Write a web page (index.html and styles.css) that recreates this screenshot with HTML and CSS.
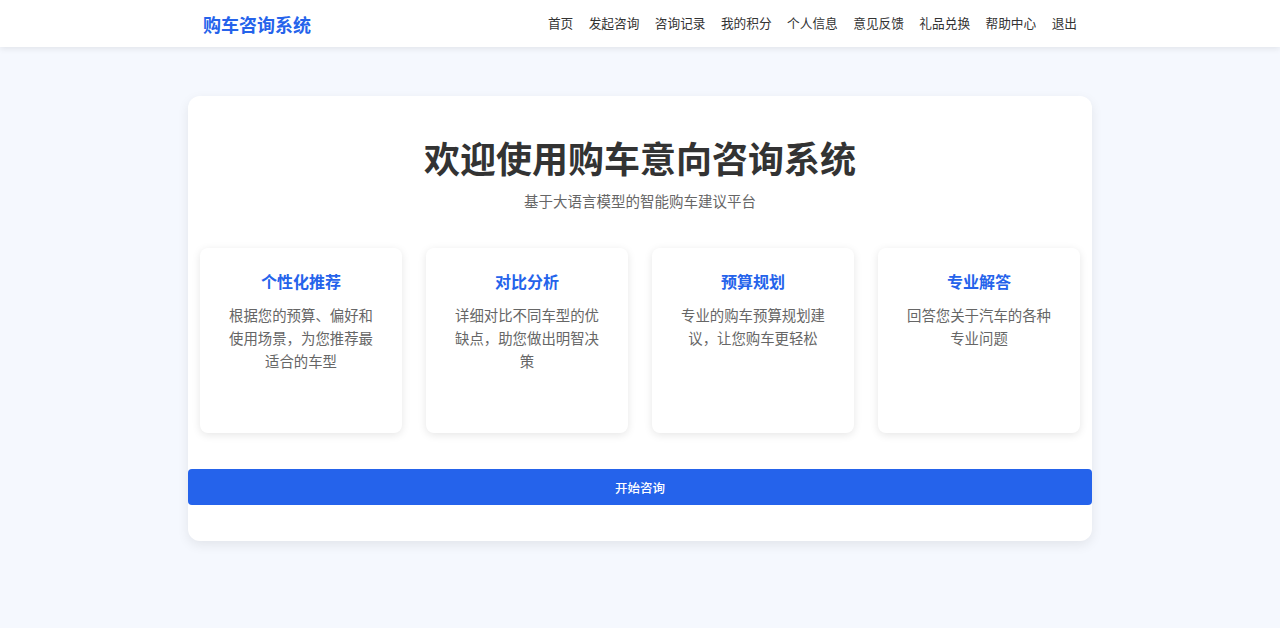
FILE: index.html
```html
<!DOCTYPE html>
<html lang="zh-CN">
<head>
<meta charset="utf-8">
<title>购车咨询系统</title>
<link rel="stylesheet" href="styles.css">
</head>
<body>
<header class="topbar">
  <div class="topbar-inner">
    <div class="logo">购车咨询系统</div>
    <nav class="nav">
      <a class="nav-link">首页</a>
      <a class="nav-link">发起咨询</a>
      <a class="nav-link">咨询记录</a>
      <a class="nav-link">我的积分</a>
      <a class="nav-link">个人信息</a>
      <a class="nav-link">意见反馈</a>
      <a class="nav-link">礼品兑换</a>
      <a class="nav-link">帮助中心</a>
      <a class="nav-link">退出</a>
    </nav>
  </div>
</header>
<main class="main">
  <section class="welcome">
    <h1 class="welcome-title">欢迎使用购车意向咨询系统</h1>
    <p class="welcome-sub">基于大语言模型的智能购车建议平台</p>
    <div class="features">
      <div class="feature">
        <h3 class="feature-title">个性化推荐</h3>
        <p class="feature-desc">根据您的预算、偏好和使用场景，为您推荐最适合的车型</p>
      </div>
      <div class="feature">
        <h3 class="feature-title">对比分析</h3>
        <p class="feature-desc">详细对比不同车型的优缺点，助您做出明智决策</p>
      </div>
      <div class="feature">
        <h3 class="feature-title">预算规划</h3>
        <p class="feature-desc">专业的购车预算规划建议，让您购车更轻松</p>
      </div>
      <div class="feature">
        <h3 class="feature-title">专业解答</h3>
        <p class="feature-desc">回答您关于汽车的各种专业问题</p>
      </div>
    </div>
    <button class="start-btn">开始咨询</button>
  </section>
</main>
</body>
</html>
```

FILE: styles.css
```css
* { box-sizing: border-box; }
html, body { margin: 0; padding: 0; }
body {
  font-family: "Noto Sans CJK SC", "Noto Sans", "Liberation Sans", sans-serif;
  background: #f5f8fe;
  color: #333;
  height: 628px;
  overflow: hidden;
}
.topbar {
  background: #fff;
  height: 47px;
  box-shadow: 0 2px 6px rgba(0, 0, 0, 0.08);
  position: relative;
}
.topbar-inner {
  width: 874px;
  margin: 0 auto;
  height: 100%;
  display: flex;
  align-items: center;
  justify-content: space-between;
}
.logo {
  font-size: 18px;
  font-weight: 700;
  color: #2563eb;
  line-height: 1;
  margin-top: 1px;
}
.nav {
  display: flex;
  gap: 15.4px;
}
.nav-link {
  font-size: 12.7px;
  color: #333;
  line-height: 1;
  cursor: pointer;
}
.main {
  padding-top: 49px;
}
.welcome {
  width: 904px;
  margin: 0 auto;
  background: #fff;
  border-radius: 12px;
  box-shadow: 0 4px 12px rgba(0, 0, 0, 0.08);
  padding: 40px 0 36px;
  text-align: center;
}
.welcome-title {
  margin: 0 0 10px;
  font-size: 36px;
  line-height: 43px;
  font-weight: 700;
  color: #333;
}
.welcome-sub {
  margin: 0 0 36px;
  font-size: 14.5px;
  line-height: 23px;
  color: #666;
}
.features {
  display: grid;
  grid-template-columns: repeat(4, 1fr);
  gap: 24px;
  margin: 0 12px 36px;
}
.feature {
  background: #fff;
  border-radius: 8px;
  box-shadow: 0 2px 8px rgba(0, 0, 0, 0.1);
  height: 185px;
  padding: 23px 24px 24px;
}
.feature-title {
  margin: 0 0 12px;
  font-size: 16px;
  line-height: 20px;
  font-weight: 700;
  color: #2563eb;
}
.feature-desc {
  margin: 0;
  font-size: 14.4px;
  line-height: 23px;
  color: #666;
}
.start-btn {
  display: block;
  width: 100%;
  height: 36px;
  border: none;
  border-radius: 4px;
  background: #2563eb;
  color: #fff;
  font-family: inherit;
  font-size: 12.5px;
  font-weight: 500;
  cursor: pointer;
}
```
